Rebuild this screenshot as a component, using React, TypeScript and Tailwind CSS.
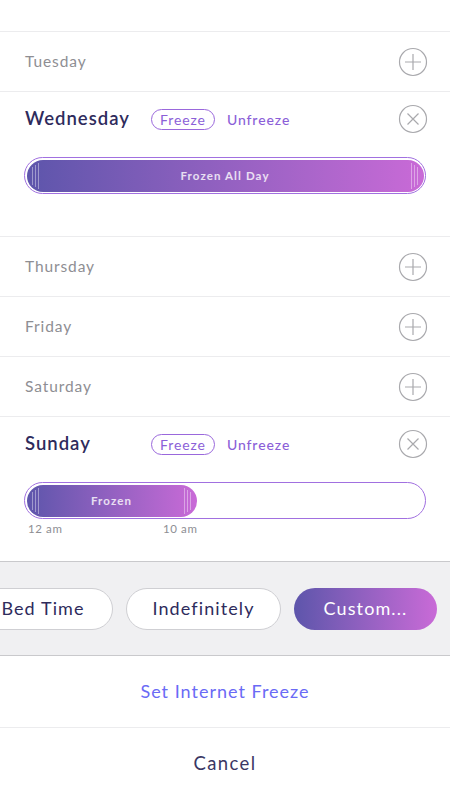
import { ReactNode } from "react";

const FONT = { fontFamily: "Lato, 'Noto Sans', sans-serif" };

function PlusIcon() {
  return (
    <svg width="30" height="30" viewBox="0 0 30 30" fill="none">
      <circle cx="15" cy="15" r="13.5" stroke="#a9a9ad" strokeWidth="1.2" />
      <path d="M15 7v16M7 15h16" stroke="#a9a9ad" strokeWidth="1.2" />
    </svg>
  );
}

function CloseIcon() {
  return (
    <svg width="30" height="30" viewBox="0 0 30 30" fill="none">
      <circle cx="15" cy="15" r="13.5" stroke="#a9a9ad" strokeWidth="1.2" />
      <path d="M9.5 9.5l11 11M20.5 9.5l-11 11" stroke="#a9a9ad" strokeWidth="1.2" />
    </svg>
  );
}

function Grip({ side }: { side: "left" | "right" }) {
  // three thin light lines at the ends of the frozen bar
  const lines = side === "left" ? ["h-[18px]", "h-[22px]", "h-[26px]"] : ["h-[26px]", "h-[22px]", "h-[18px]"];
  return (
    <div className="flex items-center gap-[2px]">
      {lines.map((h, i) => (
        <div key={i} className={`w-px ${h} bg-white/40`} />
      ))}
    </div>
  );
}

function CollapsedRow({ day }: { day: string }) {
  return (
    <div className="h-[60px] flex items-center justify-between pl-[25px] pr-[22px] border-b border-[#ececee]">
      <span className="text-[15.5px] text-[#8e8e93] tracking-[0.9px]">{day}</span>
      <PlusIcon />
    </div>
  );
}

function ExpandedRow({
  day,
  bar,
  labels,
}: {
  day: string;
  bar: ReactNode;
  labels?: ReactNode;
}) {
  return (
    <div className="border-b border-[#ececee] pb-[22px]">
      <div className="h-[54px] flex items-center pl-[25px] pr-[22px]">
        <span className="w-[126px] text-[18.5px] font-semibold text-[#2e2b5c] tracking-[1px]">{day}</span>
        <span className="h-[21px] px-[8px] flex items-center rounded-full border-[1.5px] border-[#9a68dc] text-[14px] text-[#8c5fd8] tracking-[0.9px]">
          Freeze
        </span>
        <span className="ml-[12px] text-[14px] font-medium text-[#8c5fd8] tracking-[0.9px]">Unfreeze</span>
        <div className="ml-auto">
          <CloseIcon />
        </div>
      </div>
      <div className="mt-[11px] px-[24px]">
        <div className="h-[37px] rounded-full border-[1.5px] border-[#a170e0] bg-white p-[1.5px] flex">{bar}</div>
        <div className="h-[20px] text-[11.5px] text-[#8e8e93] tracking-[0.6px]">{labels}</div>
      </div>
    </div>
  );
}

export default function App() {
  return (
    <div style={FONT} className="w-[450px] h-[800px] bg-white overflow-hidden flex flex-col">
      <div className="h-[32px] border-b border-[#ececee] shrink-0" />
      <CollapsedRow day="Tuesday" />
      <ExpandedRow
        day="Wednesday"
        bar={
          <div className="flex-1 rounded-full bg-gradient-to-r from-[#5d55ab] to-[#c96ad7] flex items-center justify-between px-[5px]">
            <Grip side="left" />
            <span className="text-[11.5px] font-bold text-white/80 tracking-[1.1px]">Frozen All Day</span>
            <Grip side="right" />
          </div>
        }
      />
      <CollapsedRow day="Thursday" />
      <CollapsedRow day="Friday" />
      <CollapsedRow day="Saturday" />
      <ExpandedRow
        day="Sunday"
        bar={
          <div className="w-[170px] rounded-full bg-gradient-to-r from-[#5d55ab] to-[#c96ad7] flex items-center justify-between px-[5px]">
            <Grip side="left" />
            <span className="text-[11.5px] font-bold text-white/80 tracking-[1.1px]">Frozen</span>
            <Grip side="right" />
          </div>
        }
        labels={
          <div className="flex pt-[1px]">
            <span className="ml-[4px] w-[135px]">12 am</span>
            <span>10 am</span>
          </div>
        }
      />
      <div className="h-[95px] bg-[#f0f0f2] border-y border-[#c9c9cc] flex items-center gap-[13px] -mt-px shrink-0">
        <button className="-ml-[27px] w-[140px] h-[42px] rounded-full bg-white border border-[#cfcfd3] text-[18px] text-[#2e2b5c] tracking-[1.1px]">
          Bed Time
        </button>
        <button className="w-[155px] h-[42px] rounded-full bg-white border border-[#cfcfd3] text-[18px] text-[#2e2b5c] tracking-[1.1px]">
          Indefinitely
        </button>
        <button className="w-[143px] h-[42px] rounded-full bg-gradient-to-r from-[#5d55ab] to-[#c96ad7] text-[18px] text-white tracking-[1.1px]">
          Custom...
        </button>
      </div>
      <div className="h-[72px] flex items-center justify-center border-b border-[#ececee] text-[18px] text-[#6a6af5] tracking-[1px] shrink-0">
        Set Internet Freeze
      </div>
      <div className="flex-1 flex items-center justify-center text-[18.5px] text-[#3a3763] tracking-[1.4px]">
        Cancel
      </div>
    </div>
  );
}
